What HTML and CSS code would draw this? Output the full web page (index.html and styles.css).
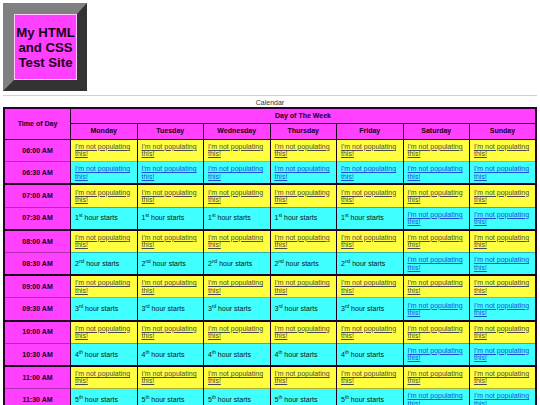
FILE: index.html
```html
<!DOCTYPE html>
<html lang="en">
<head>
<meta charset="utf-8">
<title>My HTML and CSS Test Site</title>
<link rel="stylesheet" href="styles.css">
</head>
<body>
<header class="site-header">
  <div class="logo"><div class="logo-inner">My HTML<br>and CSS<br>Test Site</div></div>
</header>
<hr class="rule">
<table class="calendar">
  <caption>Calendar</caption>
  <thead>
    <tr class="head-top"><th rowspan="2" class="time-head">Time of Day</th><th colspan="7">Day of The Week</th></tr>
    <tr class="head-days"><th>Monday</th><th>Tuesday</th><th>Wednesday</th><th>Thursday</th><th>Friday</th><th>Saturday</th><th>Sunday</th></tr>
  </thead>
  <tbody>
    <tr class="slot on-hour"><th>06:00 AM</th><td><a href="#">I'm not populating this!</a></td><td><a href="#">I'm not populating this!</a></td><td><a href="#">I'm not populating this!</a></td><td><a href="#">I'm not populating this!</a></td><td><a href="#">I'm not populating this!</a></td><td><a href="#">I'm not populating this!</a></td><td><a href="#">I'm not populating this!</a></td></tr>
    <tr class="slot half-hour"><th>06:30 AM</th><td><a href="#">I'm not populating this!</a></td><td><a href="#">I'm not populating this!</a></td><td><a href="#">I'm not populating this!</a></td><td><a href="#">I'm not populating this!</a></td><td><a href="#">I'm not populating this!</a></td><td><a href="#">I'm not populating this!</a></td><td><a href="#">I'm not populating this!</a></td></tr>
  </tbody>
  <tbody>
    <tr class="slot on-hour"><th>07:00 AM</th><td><a href="#">I'm not populating this!</a></td><td><a href="#">I'm not populating this!</a></td><td><a href="#">I'm not populating this!</a></td><td><a href="#">I'm not populating this!</a></td><td><a href="#">I'm not populating this!</a></td><td><a href="#">I'm not populating this!</a></td><td><a href="#">I'm not populating this!</a></td></tr>
    <tr class="slot half-hour"><th>07:30 AM</th><td>1<sup>st</sup> hour starts</td><td>1<sup>st</sup> hour starts</td><td>1<sup>st</sup> hour starts</td><td>1<sup>st</sup> hour starts</td><td>1<sup>st</sup> hour starts</td><td><a href="#">I'm not populating this!</a></td><td><a href="#">I'm not populating this!</a></td></tr>
  </tbody>
  <tbody>
    <tr class="slot on-hour"><th>08:00 AM</th><td><a href="#">I'm not populating this!</a></td><td><a href="#">I'm not populating this!</a></td><td><a href="#">I'm not populating this!</a></td><td><a href="#">I'm not populating this!</a></td><td><a href="#">I'm not populating this!</a></td><td><a href="#">I'm not populating this!</a></td><td><a href="#">I'm not populating this!</a></td></tr>
    <tr class="slot half-hour"><th>08:30 AM</th><td>2<sup>nd</sup> hour starts</td><td>2<sup>nd</sup> hour starts</td><td>2<sup>nd</sup> hour starts</td><td>2<sup>nd</sup> hour starts</td><td>2<sup>nd</sup> hour starts</td><td><a href="#">I'm not populating this!</a></td><td><a href="#">I'm not populating this!</a></td></tr>
  </tbody>
  <tbody>
    <tr class="slot on-hour"><th>09:00 AM</th><td><a href="#">I'm not populating this!</a></td><td><a href="#">I'm not populating this!</a></td><td><a href="#">I'm not populating this!</a></td><td><a href="#">I'm not populating this!</a></td><td><a href="#">I'm not populating this!</a></td><td><a href="#">I'm not populating this!</a></td><td><a href="#">I'm not populating this!</a></td></tr>
    <tr class="slot half-hour"><th>09:30 AM</th><td>3<sup>rd</sup> hour starts</td><td>3<sup>rd</sup> hour starts</td><td>3<sup>rd</sup> hour starts</td><td>3<sup>rd</sup> hour starts</td><td>3<sup>rd</sup> hour starts</td><td><a href="#">I'm not populating this!</a></td><td><a href="#">I'm not populating this!</a></td></tr>
  </tbody>
  <tbody>
    <tr class="slot on-hour"><th>10:00 AM</th><td><a href="#">I'm not populating this!</a></td><td><a href="#">I'm not populating this!</a></td><td><a href="#">I'm not populating this!</a></td><td><a href="#">I'm not populating this!</a></td><td><a href="#">I'm not populating this!</a></td><td><a href="#">I'm not populating this!</a></td><td><a href="#">I'm not populating this!</a></td></tr>
    <tr class="slot half-hour"><th>10:30 AM</th><td>4<sup>th</sup> hour starts</td><td>4<sup>th</sup> hour starts</td><td>4<sup>th</sup> hour starts</td><td>4<sup>th</sup> hour starts</td><td>4<sup>th</sup> hour starts</td><td><a href="#">I'm not populating this!</a></td><td><a href="#">I'm not populating this!</a></td></tr>
  </tbody>
  <tbody>
    <tr class="slot on-hour"><th>11:00 AM</th><td><a href="#">I'm not populating this!</a></td><td><a href="#">I'm not populating this!</a></td><td><a href="#">I'm not populating this!</a></td><td><a href="#">I'm not populating this!</a></td><td><a href="#">I'm not populating this!</a></td><td><a href="#">I'm not populating this!</a></td><td><a href="#">I'm not populating this!</a></td></tr>
    <tr class="slot half-hour"><th>11:30 AM</th><td>5<sup>th</sup> hour starts</td><td>5<sup>th</sup> hour starts</td><td>5<sup>th</sup> hour starts</td><td>5<sup>th</sup> hour starts</td><td>5<sup>th</sup> hour starts</td><td><a href="#">I'm not populating this!</a></td><td><a href="#">I'm not populating this!</a></td></tr>
  </tbody>
  <tbody>
    <tr class="slot on-hour"><th>12:00 PM</th><td><a href="#">I'm not populating this!</a></td><td><a href="#">I'm not populating this!</a></td><td><a href="#">I'm not populating this!</a></td><td><a href="#">I'm not populating this!</a></td><td><a href="#">I'm not populating this!</a></td><td><a href="#">I'm not populating this!</a></td><td><a href="#">I'm not populating this!</a></td></tr>
    <tr class="slot half-hour"><th>12:30 PM</th><td>6<sup>th</sup> hour starts</td><td>6<sup>th</sup> hour starts</td><td>6<sup>th</sup> hour starts</td><td>6<sup>th</sup> hour starts</td><td>6<sup>th</sup> hour starts</td><td><a href="#">I'm not populating this!</a></td><td><a href="#">I'm not populating this!</a></td></tr>
  </tbody>
</table>
</body>
</html>
```

FILE: styles.css
```css
html {
  overflow: hidden;
}

body {
  margin: 3px;
  background: #ffffff;
  color: #000000;
  font-family: "Liberation Sans", Arial, sans-serif;
}

.site-header {
  display: flex;
}

.logo {
  display: flex;
  width: 63px;
  height: 66px;
  border-style: solid;
  border-width: 11px 10px 11px 11px;
  border-color: #808080 #333333 #333333 #808080;
}

.logo-inner {
  flex: 1;
  display: flex;
  align-items: center;
  justify-content: center;
  text-align: center;
  background: #ff40ff;
  border: 1px solid #ffc8ff;
  color: #1a001a;
  font-weight: bold;
  font-size: 13.2px;
  line-height: 15px;
}

.rule {
  margin: 3.5px 0;
  height: 0;
  border: 0;
  border-top: 1px solid #d0d0d0;
}

.calendar {
  width: 534px;
  table-layout: fixed;
  border-collapse: collapse;
  border: 2px solid #2a002a;
  font-size: 7px;
  line-height: 7.4px;
}

.calendar caption {
  color: #333333;
  font-size: 7px;
  line-height: 8px;
}

.calendar th,
.calendar td {
  border: 1px solid #1e001e;
  padding: 0 4px;
}

.calendar th {
  background: #ff40ff;
  color: #140014;
  font-weight: bold;
  text-align: center;
}

.head-top {
  height: 15px;
}

.head-days {
  height: 16px;
}

.slot {
  height: 22.7px;
}

.calendar td {
  text-align: left;
  vertical-align: middle;
  color: #111111;
}

.on-hour td {
  background: #ffff40;
}

.half-hour td {
  background: #40ffff;
}

.on-hour > th,
.on-hour > td {
  border-bottom-color: rgba(0, 0, 0, 0.3);
}

.calendar tbody + tbody {
  border-top: 2px solid #1e001e;
}

.on-hour a {
  color: #4a4a4a;
}

.half-hour a {
  color: #1d4fd8;
}

.calendar sup {
  font-size: 4.8px;
  line-height: 0;
  vertical-align: 2.6px;
}
```
